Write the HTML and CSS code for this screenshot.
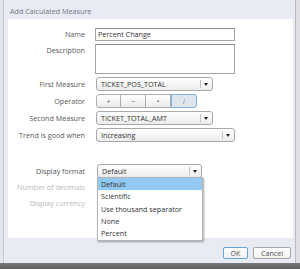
FILE: index.html
```html
<!DOCTYPE html>
<html lang="en">
<head>
    <meta charset="UTF-8">
    <title>Add Calculated Measure</title>
    <link rel="stylesheet" href="styles.css">
</head>
<body>
    <div class="screen">
        <div class="edge-left"></div>
        <div class="dialog">
            <div class="title">Add Calculated Measure</div>

            <div class="panel">
                <div class="row row-13">
                    <div class="lbl">Name</div>
                    <div class="text-input">Percent Change</div>
                </div>
                <div class="row row-30">
                    <div class="lbl">Description</div>
                    <div class="text-area"></div>
                </div>
                <div class="row row-14">
                    <div class="lbl">First Measure</div>
                    <div class="select w-measure">
                        <span class="select-value">TICKET_POS_TOTAL</span>
                        <span class="select-arrow"></span>
                    </div>
                </div>
                <div class="row row-14">
                    <div class="lbl">Operator</div>
                    <div class="op-group">
                        <div class="op">+</div>
                        <div class="op">&minus;</div>
                        <div class="op">&bull;</div>
                        <div class="op op-on">/</div>
                    </div>
                </div>
                <div class="row row-14">
                    <div class="lbl">Second Measure</div>
                    <div class="select w-measure">
                        <span class="select-value">TICKET_TOTAL_AMT</span>
                        <span class="select-arrow"></span>
                    </div>
                </div>
                <div class="row row-14">
                    <div class="lbl">Trend is good when</div>
                    <div class="select w-trend">
                        <span class="select-value">Increasing</span>
                        <span class="select-arrow"></span>
                    </div>
                </div>

                <!-- display options -->
                <div class="row row-14 row-spaced">
                    <div class="lbl">Display format</div>
                    <div class="select w-format">
                        <span class="select-value">Default</span>
                        <span class="select-arrow"></span>
                    </div>
                </div>
                <div class="row row-13">
                    <div class="lbl lbl-off">Number of decimals</div>
                </div>
                <div class="row row-13">
                    <div class="lbl lbl-off">Display currency</div>
                </div>

                <!-- open list of the Display format select -->
                <div class="dropdown">
                    <div class="dd-item dd-on">Default</div>
                    <div class="dd-item">Scientific</div>
                    <div class="dd-item">Use thousand separator</div>
                    <div class="dd-item">None</div>
                    <div class="dd-item">Percent</div>
                </div>
            </div>

            <div class="footer">
                <div class="btn btn-ok">OK</div>
                <div class="btn btn-cancel">Cancel</div>
            </div>
        </div>
        <div class="edge-right"></div>
    </div>
    <div class="taskbar"></div>
</body>
</html>
```

FILE: styles.css
```css
* {
    box-sizing: border-box;
}

body {
    margin: 0;
    width: 300px;
    height: 269px;
    overflow: hidden;
    background-color: #e8ebf4;
    font-family: "Open Sans", sans-serif;
    font-size: 7.2px;
    color: #555;
}

.screen {
    display: flex;
    height: 263px;
}

.edge-left {
    width: 4px;
    background-color: #e3e5ea;
    border-right: 1px solid #c8cad1;
}

.edge-right {
    width: 5px;
    background-color: #dedfe3;
    border-left: 1px solid #b9bac0;
}

.taskbar {
    height: 6px;
    background: linear-gradient(#7a7a7a, #5e5e5e);
}

.dialog {
    flex: 1;
    display: flex;
    flex-direction: column;
}

.title {
    height: 19px;
    padding: 3px 0 0 6px;
    line-height: 16px;
    color: #747582;
}

.panel {
    position: relative;
    height: 219px;
    width: 285px;
    margin-left: 4px;
    padding-top: 9px;
    background-color: #fff;
    display: flex;
    flex-direction: column;
    gap: 3px;
}

.row {
    display: flex;
}

.row-13 { height: 13px; }
.row-14 { height: 14px; }
.row-30 { height: 30px; }

.row-spaced {
    margin-top: 19px;
}

.lbl {
    width: 87px;
    padding-right: 10px;
    text-align: right;
    line-height: 13px;
    color: #575757;
}

.row-14 .lbl {
    line-height: 14px;
}

.lbl-off {
    color: #b9b9b9;
}

.text-input, .text-area {
    width: 140px;
    border: 1px solid #a4a4a4;
    border-top-color: #8e8e8e;
    background-color: #fff;
    color: #333;
    padding-left: 2px;
    line-height: 11px;
}

.text-area {
    height: 30px;
}

.select {
    display: flex;
    margin-left: 1px;
    border: 1px solid #a9a9a9;
    border-radius: 3px;
    background: linear-gradient(#fff, #ececec);
    color: #333;
}

.w-measure { width: 117px; }
.w-trend { width: 139px; }
.w-format { width: 105px; margin-left: 2px; }

.select-value {
    flex: 1;
    padding-left: 4px;
    line-height: 12px;
}

.select-arrow {
    position: relative;
    width: 12px;
    margin: 2px 0;
    border-left: 1px solid #c2c2c2;
}

.select-arrow::after {
    content: "";
    position: absolute;
    left: 3px;
    top: 3px;
    border-left: 2.5px solid transparent;
    border-right: 2.5px solid transparent;
    border-top: 3px solid #222;
}

.op-group {
    display: flex;
    margin-left: 1px;
}

.op {
    width: 25px;
    height: 14px;
    line-height: 12px;
    text-align: center;
    border: 1px solid #adadad;
    border-left-width: 0;
    background: linear-gradient(#fff, #ebebeb);
    color: #666;
}

.op:first-child {
    border-left-width: 1px;
    border-radius: 3px 0 0 3px;
}

.op:last-child {
    width: 26px;
    border-radius: 0 3px 3px 0;
}

.op-on {
    border: 1px solid #7fb1e3;
    background: #dfe5ec;
    color: #888;
}

.dropdown {
    position: absolute;
    z-index: 2;
    left: 89px;
    top: 158px;
    width: 106px;
    padding-bottom: 1px;
    background-color: #fff;
    border: 1px solid #b5b5b5;
    box-shadow: 1px 1px 2px rgba(0, 0, 0, 0.35);
    color: #333;
}

.dd-item {
    height: 12.3px;
    line-height: 12.3px;
    padding-left: 3px;
}

.dd-on {
    background-color: #92c9f2;
}

.footer {
    height: 25px;
    padding: 9px 4px 0 0;
    display: flex;
    justify-content: flex-end;
    align-items: flex-start;
    gap: 5px;
}

.btn {
    height: 12px;
    line-height: 10px;
    text-align: center;
    border: 1px solid #a6a6a6;
    border-radius: 2px;
    background: linear-gradient(#fff, #efefef);
    color: #555;
}

.btn-ok {
    width: 25px;
    border-color: #66a3df;
}

.btn-cancel {
    width: 38px;
}
```
